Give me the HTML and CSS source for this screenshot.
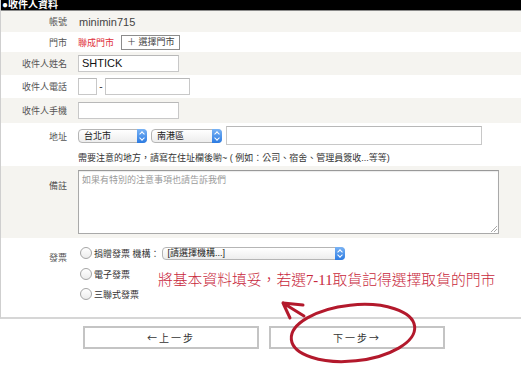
FILE: index.html
```html
<!DOCTYPE html>
<html lang="zh-Hant">
<head>
  <meta charset="UTF-8" />
  <title>收件人資料</title>
  <link rel="stylesheet" href="styles.css">
</head>
<body>

  <div class="panel">
    <div class="panel-head">●收件人資料</div>

    <div class="form">
      <div class="row shade r-account">
        <div class="label">帳號</div>
        <div class="field account">minimin715</div>
      </div>

      <div class="row r-store">
        <div class="label">門市</div>
        <div class="field">
          <span class="store">聯成門市</span>
          <span class="pick-btn">＋ 選擇門市</span>
        </div>
      </div>

      <div class="row shade r-name">
        <div class="label">收件人姓名</div>
        <div class="field"><span class="input w-name">SHTICK</span></div>
      </div>

      <div class="row r-phone">
        <div class="label">收件人電話</div>
        <div class="field">
          <span class="input w-area"></span>
          <span class="dash">-</span>
          <span class="input w-tel"></span>
        </div>
      </div>

      <div class="row shade r-mobile">
        <div class="label">收件人手機</div>
        <div class="field"><span class="input w-name"></span></div>
      </div>

      <div class="row r-addr">
        <div class="label">地址</div>
        <div class="field stack">
          <div class="addr-line">
            <span class="select w-city">台北市<span class="arrows"></span></span>
            <span class="select w-dist">南港區<span class="arrows"></span></span>
            <span class="input w-addr"></span>
          </div>
          <div class="hint">需要注意的地方，請寫在住址欄後喲~ ( 例如：公司、宿舍、管理員簽收...等等)</div>
        </div>
      </div>

      <div class="row shade r-memo">
        <div class="label">備註</div>
        <div class="field"><div class="textarea">如果有特別的注意事項也請告訴我們<span class="grip"></span></div></div>
      </div>

      <div class="row r-invoice">
        <div class="label">發票</div>
        <div class="field stack">
          <label class="radio-line"><span class="radio"></span>捐贈發票 機構：<span class="select w-org">[請選擇機構...]<span class="arrows"></span></span></label>
          <label class="radio-line"><span class="radio"></span>電子發票</label>
          <label class="radio-line"><span class="radio"></span>三聯式發票</label>
        </div>
      </div>
    </div>
  </div>

  <div class="steps">
    <button class="step">←上一步</button>
    <button class="step">下一步→</button>
  </div>

  <p class="callout">將基本資料填妥，若選7-11取貨記得選擇取貨的門市</p>

  <svg class="marker" width="521" height="377" viewBox="0 0 521 377">
    <ellipse cx="353" cy="333" rx="62" ry="28" transform="rotate(-6 353 333)" />
    <path d="M304 316 L283 303 M283 303 L303 305 M283 303 L290 318" />
  </svg>

</body>
</html>
```

FILE: styles.css
```css
* {
  box-sizing: border-box;
}

:root {
  --shade: #f5f4f0;
  --line: #cfcfcf;
  --label: #555;
  --red: #c8283c;
}

body {
  margin: 0;
  font-family: 'Liberation Sans', 'Noto Sans CJK TC', sans-serif;
  font-size: 9px;
  color: #333;
  background-color: #fff;
  position: relative;
  width: 521px;
  height: 377px;
  overflow: hidden;
}

.panel {
  border-left: 1px solid var(--line);
  border-bottom: 2px solid #d6d6d6;
}

.panel-head {
  height: 11px;
  background-color: #000;
  border-bottom: 1px solid #8a8a8a;
  color: #fff;
  font-weight: bold;
  font-size: 10px;
  line-height: 9px;
  padding-left: 1px;
  overflow: hidden;
}

.row {
  display: grid;
  grid-template-columns: 66px 1fr;
  column-gap: 11px;
  align-items: center;
}

.row.shade {
  background-color: var(--shade);
}

.label {
  text-align: right;
  color: var(--label);
}

.field {
  display: flex;
  align-items: center;
}

.stack {
  flex-direction: column;
  align-items: flex-start;
}

.r-account { height: 21px; }
.r-store   { height: 20px; }
.r-name    { height: 23px; }
.r-phone   { height: 23px; }
.r-mobile  { height: 25px; }

.r-addr {
  height: 43px;
  align-items: start;
  padding-top: 3px;
}

.r-addr .label {
  padding-top: 4px;
}

.r-memo {
  height: 72px;
  align-items: start;
  padding-top: 4px;
}

.r-memo .label {
  padding-top: 9px;
}

.r-invoice {
  height: 79px;
  align-items: start;
  padding-top: 9px;
}

.r-invoice .label {
  padding-top: 4px;
}

.account {
  font-size: 11px;
  color: #444;
  padding-left: 1px;
}

.store {
  color: #e0303a;
  margin-right: 7px;
}

.pick-btn {
  display: inline-block;
  height: 15px;
  line-height: 13px;
  padding: 0 4px 0 5px;
  border: 1px solid #8c8c8c;
  background-color: #fff;
  color: #444;
}

.input {
  display: inline-block;
  height: 17px;
  border: 1px solid #c8c8c8;
  border-top-color: #b8b8b8;
  background-color: #fff;
  font-size: 11px;
  color: #111;
  line-height: 15px;
  padding-left: 3px;
}

.w-name { width: 101px; }
.w-area { width: 19px; }
.w-tel  { width: 85px; }
.w-addr { width: 256px; height: 19px; }

.dash {
  width: 8px;
  text-align: center;
  font-size: 10px;
}

.addr-line {
  display: flex;
  align-items: center;
  gap: 4px;
}

.select {
  position: relative;
  display: inline-block;
  height: 14px;
  line-height: 12px;
  padding-left: 5px;
  border: 1px solid #b5b5b5;
  border-radius: 4px;
  background: linear-gradient(#fff, #ededed);
  color: #222;
  font-size: 9px;
}

.w-city { width: 69px; }
.w-dist { width: 71px; }
.w-org  { width: 183px; height: 13px; line-height: 11px; }

.arrows {
  position: absolute;
  top: -1px;
  right: -1px;
  bottom: -1px;
  width: 10px;
  border-radius: 0 4px 4px 0;
  background: linear-gradient(#79b3f5, #2c7be2);
}

.arrows::before,
.arrows::after {
  content: "";
  position: absolute;
  left: 3px;
  width: 3px;
  height: 3px;
  border-left: 1px solid #fff;
  border-top: 1px solid #fff;
}

.arrows::before {
  top: 3px;
  transform: rotate(45deg);
}

.arrows::after {
  bottom: 3px;
  transform: rotate(225deg);
}

.hint {
  margin-top: 6px;
  color: #333;
  white-space: nowrap;
}

.textarea {
  position: relative;
  width: 421px;
  height: 64px;
  border: 1px solid #a9a9a9;
  border-top-color: #999;
  background-color: #fff;
  color: #9a9a9a;
  padding: 2px 3px;
  box-shadow: inset 0 1px 1px rgba(0, 0, 0, 0.08);
}

.grip {
  position: absolute;
  right: 1px;
  bottom: 1px;
  width: 6px;
  height: 6px;
  background: linear-gradient(135deg, transparent 45%, #aaa 46%, #aaa 55%, transparent 56%, transparent 70%, #aaa 71%, #aaa 80%, transparent 81%);
}

.radio-line {
  display: flex;
  align-items: center;
  height: 12px;
  margin-bottom: 9px;
  color: #333;
  white-space: nowrap;
}

.radio-line:nth-child(2) {
  margin-bottom: 8px;
}

.radio {
  display: inline-block;
  width: 12px;
  height: 12px;
  margin: 0 2px 0 2px;
  border: 1px solid #a5a5a5;
  border-radius: 50%;
  background: linear-gradient(#fff, #ececec);
}

.radio-line .select {
  margin-left: 2px;
}

.steps {
  display: flex;
  gap: 10px;
  padding: 7px 0 0 83px;
}

.step {
  width: 176px;
  height: 23px;
  border: 2px solid #c4c4c4;
  background-color: #fff;
  font-family: 'Noto Sans CJK TC', 'Liberation Sans', sans-serif;
  font-size: 10px;
  color: #333;
  letter-spacing: 2px;
  padding: 0;
}

.callout {
  position: absolute;
  left: 158px;
  top: 268px;
  margin: 0;
  font-family: 'Liberation Serif', 'Noto Sans CJK TC', serif;
  font-size: 14.8px;
  font-weight: 300;
  color: var(--red);
  white-space: nowrap;
}

.marker {
  position: absolute;
  left: 0;
  top: 0;
  pointer-events: none;
}

.marker ellipse,
.marker path {
  fill: none;
  stroke: #b3192c;
  stroke-width: 3;
  stroke-linecap: round;
}
```
